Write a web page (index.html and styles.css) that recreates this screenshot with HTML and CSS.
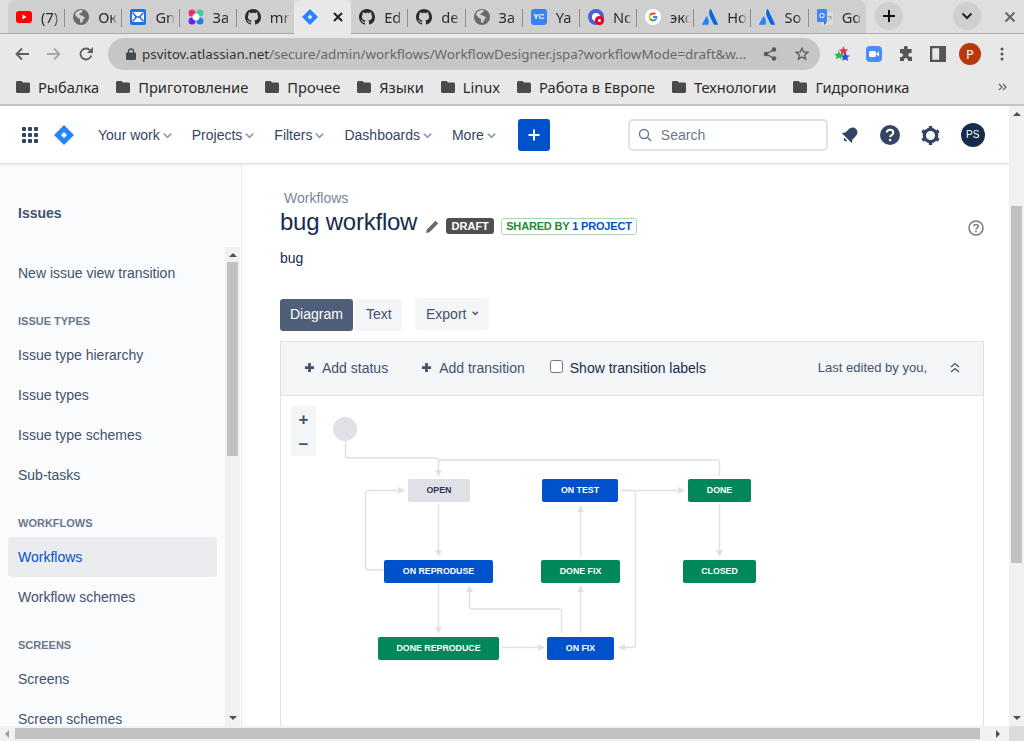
FILE: index.html
```html
<!DOCTYPE html>
<html lang="en">
<head>
    <meta charset="UTF-8">
    <title>bug workflow</title>
    <link rel="stylesheet" href="styles.css">
</head>
<body>
    <svg class="defs" width="0" height="0">
        <symbol id="globe" viewBox="0 0 16 16"><circle cx="8" cy="8" r="8" fill="#6a6a6a"/><path d="M7 1 3 3 2 6l3 3 2 1v3l2 1 1-3 2-2-2-2-3-1-1-1 2-1 2-2-1-1z" fill="#d0d0d0"/></symbol>
        <symbol id="github" viewBox="0 0 16 16"><path fill="#2b2b2b" d="M8 0C3.58 0 0 3.58 0 8c0 3.54 2.29 6.53 5.47 7.59.4.07.55-.17.55-.38 0-.19-.01-.82-.01-1.49-2.01.37-2.53-.49-2.69-.94-.09-.23-.48-.94-.82-1.13-.28-.15-.68-.52-.01-.53.63-.01 1.08.58 1.23.82.72 1.21 1.87.87 2.33.66.07-.52.28-.87.51-1.07-1.78-.2-3.64-.89-3.64-3.95 0-.87.31-1.59.82-2.15-.08-.2-.36-1.02.08-2.12 0 0 .67-.21 2.2.82.64-.18 1.32-.27 2-.27.68 0 1.36.09 2 .27 1.53-1.04 2.2-.82 2.2-.82.44 1.1.16 1.92.08 2.12.51.56.82 1.27.82 2.15 0 3.07-1.87 3.75-3.65 3.95.29.25.54.73.54 1.48 0 1.07-.01 1.93-.01 2.2 0 .21.15.46.55.38A8.013 8.013 0 0016 8c0-4.42-3.58-8-8-8z"/></symbol>
        <symbol id="atlassian" viewBox="0 0 16 16"><path fill="#0c66e4" d="M8.3 0C6.7 2.6 6.8 5.3 8 7.700L11.800 15.500c.1.2.3.3.5.3h3.400c.3 0 .4-.3.3-.5L8.900 0c-.1-.2-.5-.2-.6 0z"/><path fill="#2684ff" d="M4.700 7.300c-.2-.2-.4-.2-.5.1L.1 15.300c-.1.3 0 .5.3.5h5.500c.2 0 .4-.1.500-.3 1.100-2.600.3-6.200-1.700-8.200z"/></symbol>
        <symbol id="jira" viewBox="0 0 20 20"><path fill="#2684ff" fill-rule="evenodd" d="M10 0 20 10 10 20 0 10zM10 7 7 10l3 3 3-3z"/></symbol>
        <symbol id="folder" viewBox="0 0 14 12"><path fill="#4a4a4a" d="M1.500 0h4l1.500 1.600h5.500c.8 0 1.500.7 1.500 1.500v7.400c0 .8-.7 1.500-1.500 1.500h-11C.7 12 0 11.300 0 10.500v-9C0 .7.700 0 1.500 0z"/></symbol>
        <symbol id="chev" viewBox="0 0 10 6"><path d="M1.500 1 5 4.500 8.500 1" fill="none" stroke="currentColor" stroke-width="2" stroke-linecap="round" stroke-linejoin="round"/></symbol>
        <symbol id="plus" viewBox="0 0 12 12"><path d="M6 1v10M1 6h10" fill="none" stroke="currentColor" stroke-width="3"/></symbol>
    </svg>

    <!-- Browser tabs -->
    <div class="tabstrip">
        <div class="tab"><svg class="fav" viewBox="0 0 16 16"><rect y="2" width="16" height="12" rx="3" fill="#f00"/><path d="M6.500 5.500v5l4-2.500z" fill="#fff"/></svg><span class="tab-title">(7)</span></div>
        <div class="tab"><svg class="fav"><use href="#globe"/></svg><span class="tab-title">Ок</span></div>
        <div class="tab"><svg class="fav" viewBox="0 0 16 16"><rect width="16" height="16" rx="2" fill="#1a73e8"/><rect x="2" y="3" width="12" height="10" fill="#fff"/><path d="M2.500 3.500 6.500 8l-4 4.500M13.500 3.500 9.500 8l4 4.500M5 8h6" stroke="#1a73e8" stroke-width="1.500" fill="none"/></svg><span class="tab-title">Gn</span></div>
        <div class="tab"><svg class="fav" viewBox="0 0 16 16"><circle cx="4" cy="4" r="3.500" fill="#f0325f"/><circle cx="12" cy="4" r="3.500" fill="#3fcf9b"/><circle cx="4" cy="12" r="3.500" fill="#6a1ff0"/><circle cx="12" cy="12" r="3.500" fill="#1e7cf0"/><circle cx="8" cy="8" r="3.500" fill="#fff"/></svg><span class="tab-title">За</span></div>
        <div class="tab"><svg class="fav"><use href="#github"/></svg><span class="tab-title">mr</span></div>
        <div class="tab tab-active"><svg class="fav"><use href="#jira"/></svg><svg class="tab-close" viewBox="0 0 10 10"><path d="M1 1l8 8M9 1 1 9" stroke="#222" stroke-width="2"/></svg></div>
        <div class="tab"><svg class="fav"><use href="#github"/></svg><span class="tab-title">Ed</span></div>
        <div class="tab"><svg class="fav"><use href="#github"/></svg><span class="tab-title">de</span></div>
        <div class="tab"><svg class="fav"><use href="#globe"/></svg><span class="tab-title">За</span></div>
        <div class="tab"><span class="fav fav-yc">YC</span><span class="tab-title">Ya</span></div>
        <div class="tab"><svg class="fav" viewBox="0 0 16 16"><circle cx="8" cy="8" r="8" fill="#4a5fd0"/><circle cx="8" cy="8" r="4" fill="#fff"/><circle cx="11.500" cy="11.500" r="4.500" fill="#e8001c"/><circle cx="11.500" cy="11.500" r="1.500" fill="#fff"/></svg><span class="tab-title">Nc</span></div>
        <div class="tab"><svg class="fav" viewBox="0 0 16 16"><circle cx="8" cy="8" r="8" fill="#fff"/><path d="M5 6.200A3.500 3.500 0 0 1 10.400 5.400" stroke="#ea4335" stroke-width="1.800" fill="none"/><path d="M5 6.200a3.500 3.500 0 0 0 0 3.600" stroke="#fbbc05" stroke-width="1.800" fill="none"/><path d="M5 9.800a3.500 3.500 0 0 0 5.600.5" stroke="#34a853" stroke-width="1.800" fill="none"/><path d="M10.600 10.300A3.500 3.500 0 0 0 11.500 8H8" stroke="#4285f4" stroke-width="1.800" fill="none"/></svg><span class="tab-title">экс</span></div>
        <div class="tab"><svg class="fav"><use href="#atlassian"/></svg><span class="tab-title">Ho</span></div>
        <div class="tab"><svg class="fav"><use href="#atlassian"/></svg><span class="tab-title">So</span></div>
        <div class="tab"><svg class="fav" viewBox="0 0 16 16"><rect x="5" y="3" width="11" height="13" rx="1" fill="#dcdcdc"/><rect width="10" height="13" rx="1" fill="#4285f4"/><path d="M7 13v3l3-3z" fill="#3367d6"/><circle cx="5" cy="6.500" r="2.200" fill="none" stroke="#fff" stroke-width="1"/><path d="M11 8h4M13 7v1.500M11.500 12l3-3" stroke="#888" stroke-width=".8" fill="none"/></svg><span class="tab-title">Go</span></div>
        <div class="round-btn round-new"><svg width="14" height="14" viewBox="0 0 14 14"><path d="M7 1v12M1 7h12" stroke="#111" stroke-width="2"/></svg></div>
        <div class="round-btn round-list"><svg width="12" height="8" viewBox="0 0 12 8"><path d="M1.500 1.500 6 6l4.500-4.500" fill="none" stroke="#222" stroke-width="2"/></svg></div>
        <svg class="win-close" width="10" height="10" viewBox="0 0 10 10"><path d="M.5.500l9 9M9.500.500l-9 9" stroke="#666" stroke-width="2"/></svg>
    </div>

    <!-- Address bar -->
    <div class="toolbar">
        <svg class="tool" viewBox="0 0 14 14"><path d="M14 7H2M7 1.500 1.500 7 7 12.500" fill="none" stroke="#5f5f5f" stroke-width="1.800"/></svg>
        <svg class="tool tool-fwd" viewBox="0 0 14 14"><path d="M0 7h12M7 1.500 12.500 7 7 12.500" fill="none" stroke="#a8a8a8" stroke-width="1.800"/></svg>
        <svg class="tool tool-reload" viewBox="0 0 14 14"><path d="M12.300 8.500A5.500 5.500 0 1 1 11 3.200" fill="none" stroke="#5f5f5f" stroke-width="1.800"/><path d="M14 0v6H8z" fill="#5f5f5f"/></svg>
        <div class="omnibox">
            <svg class="lock" viewBox="0 0 10 12"><path d="M2.500 5V3.500a2.500 2.500 0 0 1 5 0V5" fill="none" stroke="#4a4a4a" stroke-width="1.300"/><rect y="4.500" width="10" height="7.500" rx="1" fill="#4a4a4a"/></svg>
            <div class="url"><span class="url-host">psvitov.atlassian.net</span>/secure/admin/workflows/WorkflowDesigner.jspa?workflowMode=draft&amp;w...</div>
            <svg class="omni-share" viewBox="0 0 14 14"><path d="M11 2.500 3 7l8 4.500" fill="none" stroke="#5a5a5a" stroke-width="1.300"/><circle cx="11" cy="2.500" r="2.300" fill="#5a5a5a"/><circle cx="3" cy="7" r="2.300" fill="#5a5a5a"/><circle cx="11" cy="11.500" r="2.300" fill="#5a5a5a"/></svg>
            <svg class="omni-star" viewBox="0 0 14 14"><path d="M7 1.200 8.700 5l4.100.4-3.100 2.700.9 4L7 10l-3.600 2.100.9-4-3.100-2.700L5.300 5z" fill="none" stroke="#5a5a5a" stroke-width="1.300"/></svg>
        </div>
        <svg class="ext ext-first" viewBox="0 0 16 16"><g transform="translate(9.500 5) scale(5)" fill="#f0304a"><path d="M0-1 .26-.36.95-.31.43.14.59.81 0 .45-.59.81-.43.14-.95-.31-.26-.36z"/></g><g transform="translate(4.800 9.500) scale(5)" fill="#23c050"><path d="M0-1 .26-.36.95-.31.43.14.59.81 0 .45-.59.81-.43.14-.95-.31-.26-.36z"/></g><g transform="translate(11.200 11) scale(5)" fill="#2a4fd8"><path d="M0-1 .26-.36.95-.31.43.14.59.81 0 .45-.59.81-.43.14-.95-.31-.26-.36z"/></g></svg>
        <svg class="ext" viewBox="0 0 16 16"><rect width="16" height="16" rx="4" fill="#4a8cff"/><rect x="3" y="5" width="7" height="6" rx="1.500" fill="#fff"/><path d="M10.500 7.500 13 5.500v5l-2.500-2z" fill="#fff"/></svg>
        <svg class="ext" viewBox="0 0 16 16"><path d="M6 1.500a1.800 1.800 0 0 1 3.600 0V3h4v4h-1.300a1.900 1.900 0 0 0 0 3.800H14V15H9.800v-1.200a1.900 1.900 0 0 0-3.800 0V15H2v-4h1.200a1.900 1.900 0 0 0 0-3.800H2V3h4z" fill="#555"/></svg>
        <svg class="ext" viewBox="0 0 14 14"><path fill="#555" fill-rule="evenodd" d="M0 0h14v14H0zM2 2v10h6V2z"/></svg>
        <div class="profile">P</div>
        <svg class="kebab" viewBox="0 0 4 14"><circle cx="2" cy="2" r="1.500" fill="#555"/><circle cx="2" cy="7" r="1.500" fill="#555"/><circle cx="2" cy="12" r="1.500" fill="#555"/></svg>
    </div>

    <!-- Bookmarks -->
    <div class="bookmarks">
        <div class="bookmark"><svg class="folder"><use href="#folder"/></svg>Рыбалка</div>
        <div class="bookmark"><svg class="folder"><use href="#folder"/></svg>Приготовление</div>
        <div class="bookmark"><svg class="folder"><use href="#folder"/></svg>Прочее</div>
        <div class="bookmark"><svg class="folder"><use href="#folder"/></svg>Языки</div>
        <div class="bookmark"><svg class="folder"><use href="#folder"/></svg>Linux</div>
        <div class="bookmark"><svg class="folder"><use href="#folder"/></svg>Работа в Европе</div>
        <div class="bookmark"><svg class="folder"><use href="#folder"/></svg>Технологии</div>
        <div class="bookmark"><svg class="folder"><use href="#folder"/></svg>Гидропоника</div>
        <svg class="more-marks" viewBox="0 0 9 8"><path d="M1 1l3 3-3 3M5 1l3 3-3 3" fill="none" stroke="#666" stroke-width="1.300"/></svg>
    </div>

    <div class="viewport">
        <div class="page">
            <!-- Jira nav -->
            <header class="topnav">
                <svg class="apps" viewBox="0 0 16 16"><g fill="#344563"><rect width="4" height="4" rx="1"/><rect x="6" width="4" height="4" rx="1"/><rect x="12" width="4" height="4" rx="1"/><rect y="6" width="4" height="4" rx="1"/><rect x="6" y="6" width="4" height="4" rx="1"/><rect x="12" y="6" width="4" height="4" rx="1"/><rect y="12" width="4" height="4" rx="1"/><rect x="6" y="12" width="4" height="4" rx="1"/><rect x="12" y="12" width="4" height="4" rx="1"/></g></svg>
                <svg class="logo"><use href="#jira"/></svg>
                <nav class="menu">
                    <a class="menu-item">Your work<svg class="chev"><use href="#chev"/></svg></a>
                    <a class="menu-item">Projects<svg class="chev"><use href="#chev"/></svg></a>
                    <a class="menu-item">Filters<svg class="chev"><use href="#chev"/></svg></a>
                    <a class="menu-item">Dashboards<svg class="chev"><use href="#chev"/></svg></a>
                    <a class="menu-item">More<svg class="chev"><use href="#chev"/></svg></a>
                </nav>
                <div class="create"><svg width="12" height="12" viewBox="0 0 12 12"><path d="M6 .5v11M.5 6h11" stroke="#fff" stroke-width="2"/></svg></div>
                <div class="search">
                    <svg width="14" height="14" viewBox="0 0 14 14"><circle cx="6" cy="6" r="4.500" fill="none" stroke="#6b778c" stroke-width="1.400"/><path d="M9.500 9.500 13 13" stroke="#6b778c" stroke-width="1.400"/></svg>
                    <span>Search</span>
                </div>
                <svg class="nav-icon bell" viewBox="0 0 18 18"><g transform="rotate(45 9 9)" fill="#344563"><path d="M9 .5C5.600.5 4 3 4 6.500v4L1.800 13.500h14.400L14 10.500v-4C14 3 12.400.5 9 .5z"/><path d="M7 15h4a2 2 0 0 1-4 0z"/></g></svg>
                <svg class="nav-icon help" viewBox="0 0 20 20"><circle cx="10" cy="10" r="10" fill="#344563"/><path d="M6.800 7.500C7 5.600 8.400 4.800 10 4.800c1.800 0 3.300 1.100 3.300 2.900 0 2.400-3.200 2.400-3.200 4.400" fill="none" stroke="#fff" stroke-width="2"/><circle cx="10.100" cy="15" r="1.300" fill="#fff"/></svg>
                <svg class="nav-icon gear" viewBox="0 0 20 20"><circle cx="10" cy="10" r="6.500" fill="none" stroke="#344563" stroke-width="3.500"/><g stroke="#344563" stroke-width="3.600"><path d="M10 0v3.500M10 16.500V20M1.300 5l3 1.800M15.700 13.200l3 1.800M1.300 15l3-1.800M15.700 6.800l3-1.800"/></g></svg>
                <div class="avatar">PS</div>
            </header>

            <div class="layout">
                <!-- Admin sidebar -->
                <aside class="sidebar">
                    <h2 class="side-title">Issues</h2>
                    <div class="side-scroll">
                        <div class="side-list">
                            <a class="side-link">New issue view transition</a>
                            <h3 class="side-head">ISSUE TYPES</h3>
                            <a class="side-link">Issue type hierarchy</a>
                            <a class="side-link">Issue types</a>
                            <a class="side-link">Issue type schemes</a>
                            <a class="side-link">Sub-tasks</a>
                            <h3 class="side-head">WORKFLOWS</h3>
                            <a class="side-link side-active">Workflows</a>
                            <a class="side-link">Workflow schemes</a>
                            <h3 class="side-head">SCREENS</h3>
                            <a class="side-link">Screens</a>
                            <a class="side-link">Screen schemes</a>
                        </div>
                        <div class="vbar vbar-side">
                            <i class="arrow-up"></i>
                            <div class="vbar-track"><div class="thumb"></div></div>
                            <i class="arrow-down"></i>
                        </div>
                    </div>
                </aside>

                <main class="content">
                    <div class="crumb">Workflows</div>
                    <div class="title-row">
                        <h1>bug workflow</h1>
                        <svg class="pencil" viewBox="0 0 14 14"><path fill="#6b6b6b" d="M10.500 .8 13.200 3.500 4.500 12.200 1 13l.8-3.500z"/></svg>
                        <span class="lozenge">DRAFT</span>
                        <span class="shared">SHARED BY <b>1 PROJECT</b></span>
                        <svg class="page-help" viewBox="0 0 16 16"><circle cx="8" cy="8" r="7" fill="none" stroke="#7a7a7a" stroke-width="1.500"/><path d="M5.800 6.300C6 5 6.900 4.500 8 4.500c1.200 0 2.200.7 2.200 1.900 0 1.600-2.200 1.600-2.200 3" fill="none" stroke="#7a7a7a" stroke-width="1.500"/><circle cx="8" cy="11.400" r="1" fill="#7a7a7a"/></svg>
                    </div>
                    <p class="issue-type">bug</p>

                    <div class="view-row">
                        <a class="btn btn-on">Diagram</a>
                        <a class="btn btn-text">Text</a>
                        <a class="btn btn-export">Export<svg class="chev-sm"><use href="#chev"/></svg></a>
                    </div>

                    <div class="designer">
                        <div class="designer-bar">
                            <a class="bar-action"><svg class="bar-plus"><use href="#plus"/></svg>Add status</a>
                            <a class="bar-action"><svg class="bar-plus"><use href="#plus"/></svg>Add transition</a>
                            <label class="bar-check"><input type="checkbox">Show transition labels</label>
                            <span class="edited">Last edited by you,</span>
                            <svg class="collapse" viewBox="0 0 10 11"><path d="M1 5 5 1.500 9 5M1 10 5 6.500 9 10" fill="none" stroke="#42526e" stroke-width="1.300"/></svg>
                        </div>
                        <div class="canvas">
                            <div class="zoom-box"><span>+</span><span>−</span></div>
                            <svg class="edges" viewBox="281 396 702 330" width="702" height="330">
                                <circle cx="345" cy="429" r="12" fill="#dfe1e6"/>
                                <g fill="none" stroke="#dfe1e6" stroke-width="1.500">
                                    <path d="M345.500 441v14q0 3 3 3h87q3 0 3 3v10"/>
                                    <path d="M719.500 476v-13q0-3-3-3H442q-3 0-3.500 3"/>
                                    <path d="M438.500 505v46"/>
                                    <path d="M384 570h-15q-3.500 0-3.500-3.500v-72.500q0-3.500 3.500-3.500h30"/>
                                    <path d="M438.500 585v42"/>
                                    <path d="M502 647.500h37"/>
                                    <path d="M580.500 633v-42"/>
                                    <path d="M580.500 556v-45"/>
                                    <path d="M621 490.500h58"/>
                                    <path d="M621 490.500h11q3.500 0 3.500 3.500v150q0 3.500-3.500 3.500h-8"/>
                                    <path d="M719.500 505v46"/>
                                    <path d="M561.500 633v-21q0-3-3-3h-86q-3 0-3-3v-15"/>
                                </g>
                                <g fill="#dfe1e6">
                                    <path d="M435 470h7l-3.500 7z"/>
                                    <path d="M435 550h7l-3.500 7z"/>
                                    <path d="M398 487v7l7-3.500z"/>
                                    <path d="M435 627h7l-3.500 7z"/>
                                    <path d="M538 644v7l7-3.500z"/>
                                    <path d="M577 592h7l-3.500-7z"/>
                                    <path d="M577 512h7l-3.500-7z"/>
                                    <path d="M678 487v7l7-3.500z"/>
                                    <path d="M625 644v7l-7-3.500z"/>
                                    <path d="M716 550h7l-3.500 7z"/>
                                    <path d="M466 592h7l-3.500-7z"/>
                                </g>
                            </svg>
                            <div class="node node-grey n-open">OPEN</div>
                            <div class="node node-blue n-test">ON TEST</div>
                            <div class="node node-green n-done">DONE</div>
                            <div class="node node-blue n-repro">ON REPRODUSE</div>
                            <div class="node node-green n-dfix">DONE FIX</div>
                            <div class="node node-green n-closed">CLOSED</div>
                            <div class="node node-green n-drepro">DONE REPRODUCE</div>
                            <div class="node node-blue n-fix">ON FIX</div>
                        </div>
                    </div>
                </main>
            </div>
        </div>

        <div class="vbar vbar-main">
            <i class="arrow-up"></i>
            <div class="vbar-track"><div class="thumb"></div></div>
            <i class="arrow-down"></i>
        </div>
        <div class="hbar">
            <i class="arrow-left"></i>
            <div class="hbar-thumb"></div>
            <i class="arrow-right"></i>
        </div>
        <div class="corner"></div>
    </div>
</body>
</html>
```

FILE: styles.css
```css
* {
    box-sizing: border-box;
}

html, body {
    margin: 0;
    padding: 0;
    height: 100%;
    overflow: hidden;
}

body {
    width: 1024px;
    height: 741px;
    display: flex;
    flex-direction: column;
    font-family: "Liberation Sans", Arial, sans-serif;
    font-size: 14px;
    color: #172b4d;
    background-color: #fff;
}

.defs {
    position: absolute;
}

/* Browser chrome */
.tabstrip {
    height: 34px;
    flex: none;
    display: flex;
    align-items: stretch;
    padding-left: 8px;
    background-color: #dfdfdf;
    border-bottom: 1px solid #a9a9a9;
    font-family: "Noto Sans", sans-serif;
}

.tab {
    width: 57.2px;
    height: 33px;
    flex: none;
    display: flex;
    align-items: center;
    padding-left: 8px;
    background-color: #cfcfcf;
    position: relative;
    overflow: hidden;
}

.tab:first-child {
    border-radius: 8px 0 0 0;
}

.tab::after {
    content: "";
    position: absolute;
    right: 0;
    top: 9px;
    width: 1px;
    height: 18px;
    background-color: #8e8e8e;
}

.tab-active {
    background-color: #e8e8e8;
    border-radius: 8px 8px 0 0;
    height: 34px;
    z-index: 1;
}

.tab-active::after,
.tab:nth-child(5)::after {
    display: none;
}

.tab:nth-child(15) {
    border-radius: 0 8px 0 0;
}

.tab:nth-child(15)::after {
    display: none;
}

.fav {
    width: 16px;
    height: 16px;
    flex: none;
}

.fav-yc {
    background-color: #3b82f0;
    color: #fff;
    border-radius: 3px;
    font-family: "Liberation Sans", sans-serif;
    font-size: 8px;
    font-weight: bold;
    line-height: 16px;
    text-align: center;
}

.tab-title {
    margin-left: 9px;
    width: 20px;
    overflow: hidden;
    white-space: nowrap;
    font-size: 14.67px;
    color: #2a2a2a;
    -webkit-mask-image: linear-gradient(to right, #000 65%, transparent);
    mask-image: linear-gradient(to right, #000 65%, transparent);
}

.tab-close {
    width: 10px;
    height: 10px;
    margin-left: 15px;
}

.round-btn {
    width: 28px;
    height: 28px;
    margin-top: 2px;
    flex: none;
    border-radius: 50%;
    background-color: #cfcfcf;
    display: flex;
    align-items: center;
    justify-content: center;
}

.round-new {
    margin-left: 9px;
}

.round-list {
    margin-left: 50px;
}

.win-close {
    margin: 12px 0 0 24px;
    flex: none;
}

.toolbar {
    height: 38px;
    flex: none;
    display: flex;
    align-items: center;
    padding-top: 2px;
    background-color: #e8e8e8;
}

.tool {
    width: 14px;
    height: 14px;
    margin-left: 15px;
    flex: none;
}

.tool-fwd {
    margin-left: 18px;
}

.tool-reload {
    margin-left: 18px;
}

.omnibox {
    width: 712px;
    height: 32px;
    margin-left: 15px;
    flex: none;
    display: flex;
    align-items: center;
    padding-left: 18px;
    background-color: #c6c6c6;
    border-radius: 16px;
    font-family: "Noto Sans", sans-serif;
    font-size: 13.4px;
    color: #686868;
}

.lock {
    width: 10px;
    height: 12px;
    flex: none;
}

.url {
    margin-left: 6px;
    width: 611px;
    white-space: nowrap;
    overflow: hidden;
}

.url-host {
    color: #333;
}

.omni-share,
.omni-star {
    width: 14px;
    height: 14px;
    flex: none;
}

.omni-share {
    margin-left: 10px;
}

.omni-star {
    margin-left: 18px;
}

.ext {
    width: 16px;
    height: 16px;
    margin-left: 16px;
    flex: none;
}

.ext-first {
    margin-left: 14px;
}

.profile {
    width: 22px;
    height: 22px;
    margin-left: 13px;
    border-radius: 50%;
    background-color: #b83a0c;
    color: #fff;
    font-family: "Noto Sans", sans-serif;
    font-size: 13px;
    line-height: 22px;
    text-align: center;
    flex: none;
}

.kebab {
    width: 4px;
    height: 14px;
    margin-left: 19px;
    flex: none;
}

.bookmarks {
    height: 32px;
    flex: none;
    display: flex;
    align-items: center;
    gap: 17px;
    padding: 0 0 2px 16px;
    background-color: #e8e8e8;
    font-family: "Noto Sans", sans-serif;
    font-size: 14.67px;
    color: #2a2a2a;
}

.bookmark {
    display: flex;
    align-items: center;
    gap: 8px;
    white-space: nowrap;
}

.folder {
    width: 14px;
    height: 12px;
}

.more-marks {
    width: 9px;
    height: 8px;
    margin-left: 72px;
}

/* Page area with scrollbars */
.viewport {
    flex: 1;
    min-height: 0;
    display: grid;
    grid-template-columns: 1fr 15px;
    grid-template-rows: 1fr 15px;
    border-top: 2px solid #c4c4c4;
}

.page {
    min-width: 0;
    min-height: 0;
    overflow: hidden;
    display: flex;
    flex-direction: column;
}

.vbar {
    display: flex;
    flex-direction: column;
    align-items: center;
    background-color: #f1f1f1;
}

.vbar-track {
    flex: 1;
    width: 100%;
    min-height: 0;
    padding: 0 2px;
}

.thumb {
    background-color: #c1c1c1;
}

.vbar-main .vbar-track {
    padding-top: 87px;
}

.vbar-main .thumb {
    height: 357px;
}

.vbar-side .vbar-track {
    padding-top: 2px;
}

.vbar-side .thumb {
    height: 194px;
}

.arrow-up,
.arrow-down,
.arrow-left,
.arrow-right {
    width: 0;
    height: 0;
    flex: none;
    display: block;
}

.arrow-up {
    margin: 6px 0 3px;
    border-left: 4px solid transparent;
    border-right: 4px solid transparent;
    border-bottom: 4px solid #505050;
}

.arrow-down {
    margin: 3px 0 6px;
    border-left: 4px solid transparent;
    border-right: 4px solid transparent;
    border-top: 4px solid #505050;
}

.hbar {
    display: flex;
    align-items: center;
    background-color: #f1f1f1;
}

.arrow-left {
    margin: 0 6px 0 5px;
    border-top: 4px solid transparent;
    border-bottom: 4px solid transparent;
    border-right: 4px solid #a0a0a0;
}

.hbar-thumb {
    width: 965px;
    height: 11px;
    background-color: #c1c1c1;
}

.arrow-right {
    margin-left: 16px;
    border-top: 4px solid transparent;
    border-bottom: 4px solid transparent;
    border-left: 4px solid #505050;
}

.corner {
    background-color: #dcdcdc;
}

/* Jira top nav */
.topnav {
    height: 58px;
    flex: none;
    display: flex;
    align-items: center;
    padding: 1px 0 0 22px;
    background-color: #fff;
    border-bottom: 1px solid #dfe1e6;
    box-shadow: 0 1px 2px rgba(9, 30, 66, 0.08);
    position: relative;
    z-index: 2;
}

.apps {
    width: 16px;
    height: 16px;
    flex: none;
}

.logo {
    width: 20px;
    height: 20px;
    margin-left: 16px;
    flex: none;
}

.menu {
    display: flex;
    margin-left: 24px;
    gap: 20px;
    color: #42526e;
}

.menu-item {
    display: flex;
    align-items: center;
    gap: 3px;
    white-space: nowrap;
    color: #344563;
}

.chev {
    width: 9px;
    height: 6px;
    color: #97a0af;
    margin-top: 1px;
}

.create {
    width: 32px;
    height: 32px;
    margin-left: 22px;
    flex: none;
    display: flex;
    align-items: center;
    justify-content: center;
    background-color: #0052cc;
    border-radius: 3px;
}

.search {
    width: 200px;
    height: 32px;
    margin-left: 78px;
    flex: none;
    display: flex;
    align-items: center;
    gap: 9px;
    padding-left: 8px;
    border: 2px solid #dfe1e6;
    border-radius: 5px;
    color: #6b778c;
}

.nav-icon {
    flex: none;
}

.bell {
    width: 18px;
    height: 18px;
    margin-left: 13px;
}

.help {
    width: 20px;
    height: 20px;
    margin-left: 21px;
}

.gear {
    width: 19px;
    height: 19px;
    margin-left: 21px;
}

.avatar {
    width: 24px;
    height: 24px;
    margin-left: 21px;
    flex: none;
    border-radius: 50%;
    background-color: #172b4d;
    color: #fff;
    font-size: 10px;
    line-height: 24px;
    text-align: center;
    letter-spacing: 0.3px;
}

/* Sidebar and content */
.layout {
    flex: 1;
    min-height: 0;
    display: flex;
}

.sidebar {
    width: 242px;
    flex: none;
    display: flex;
    flex-direction: column;
    background-color: #fafbfc;
    border-right: 1px solid #ebecf0;
}

.side-title {
    height: 83px;
    flex: none;
    margin: 0;
    padding: 41px 0 0 18px;
    font-size: 14px;
    line-height: 16px;
    font-weight: bold;
    color: #42526e;
}

.side-scroll {
    flex: 1;
    min-height: 0;
    display: flex;
}

.side-list {
    width: 225px;
    flex: none;
    overflow: hidden;
    padding: 6px 8px 0;
}

.vbar-side {
    width: 15px;
    flex: none;
    height: 479px;
}

.side-link {
    display: block;
    height: 40px;
    padding-left: 10px;
    line-height: 40px;
    border-radius: 3px;
    color: #42526e;
    white-space: nowrap;
}

.side-active {
    background-color: #ebecf0;
    color: #0052cc;
}

.side-head {
    margin: 0;
    height: 42px;
    padding: 21px 0 0 10px;
    font-size: 11px;
    line-height: 14px;
    font-weight: bold;
    color: #6b778c;
}

.content {
    flex: 1;
    min-width: 0;
    padding: 26px 25px 0 38px;
    display: flex;
    flex-direction: column;
}

.crumb {
    padding-left: 4px;
    line-height: 16px;
    color: #7a869a;
}

.title-row {
    height: 32px;
    display: flex;
    align-items: center;
}

h1 {
    margin: 0;
    font-size: 24px;
    font-weight: normal;
    letter-spacing: -0.24px;
    color: #172b4d;
    line-height: 32px;
}

.pencil {
    width: 14px;
    height: 14px;
    margin: 10px 0 0 8px;
    flex: none;
}

.lozenge {
    width: 48px;
    margin: 8px 0 0 7px;
    height: 16px;
    line-height: 16px;
    text-align: center;
    background-color: #505050;
    color: #fff;
    border-radius: 3px;
    font-size: 11px;
    font-weight: bold;
}

.shared {
    margin: 8px 0 0 7px;
    padding: 0 4px;
    height: 17px;
    line-height: 15px;
    border: 1px solid #abd5b4;
    border-radius: 3px;
    font-size: 11px;
    font-weight: bold;
    letter-spacing: -0.17px;
    color: #1f8a33;
    white-space: nowrap;
}

.shared b {
    color: #0052cc;
}

.page-help {
    width: 16px;
    height: 16px;
    margin: 12px 0 0 auto;
    flex: none;
}

.issue-type {
    margin: 12px 0 0;
    line-height: 16px;
    color: #172b4d;
}

.view-row {
    margin-top: 33px;
    display: flex;
    align-items: flex-start;
}

.btn {
    height: 32px;
    line-height: 30px;
    padding: 0 10px;
    border-radius: 3px;
    background-color: #f4f5f7;
    color: #42526e;
}

.btn-on {
    width: 73px;
    background-color: #505f79;
    color: #fff;
}

.btn-text {
    width: 47px;
    margin-left: 2px;
    padding-left: 11px;
}

.btn-export {
    width: 74px;
    margin: -1px 0 0 13px;
    padding-left: 11px;
    display: flex;
    align-items: center;
    gap: 6px;
}

.chev-sm {
    width: 8px;
    height: 5px;
    margin-top: -2px;
    color: #42526e;
}

.designer {
    margin-top: 10px;
    width: 704px;
    flex: 1;
    min-height: 0;
    border-left: 1px solid #dfe1e6;
    border-right: 1px solid #dfe1e6;
    border-top: 1px solid #dfe1e6;
    display: flex;
    flex-direction: column;
}

.designer-bar {
    height: 54px;
    flex: none;
    display: flex;
    align-items: center;
    padding: 0 0 2px 23px;
    background-color: #f4f5f7;
    border-bottom: 1px solid #dfe1e6;
    color: #42526e;
}

.bar-action {
    display: flex;
    align-items: center;
    gap: 7px;
    margin-right: 33px;
    white-space: nowrap;
}

.bar-plus {
    width: 11px;
    height: 11px;
    color: #42526e;
}

.bar-check {
    display: flex;
    align-items: center;
    margin-left: -8px;
    color: #172b4d;
    white-space: nowrap;
}

.bar-check input {
    width: 13px;
    height: 13px;
    margin: -2px 7px 0 0;
}

.edited {
    margin-left: auto;
    font-size: 13px;
    color: #42526e;
}

.collapse {
    width: 10px;
    height: 11px;
    margin: 0 23px;
    flex: none;
}

/* Workflow diagram, nodes are placed on a free canvas */
.canvas {
    flex: 1;
    min-height: 0;
    position: relative;
    overflow: hidden;
}

.edges {
    position: absolute;
    left: 0;
    top: 0;
}

.zoom-box {
    position: absolute;
    left: 10px;
    top: 10px;
    width: 25px;
    height: 50px;
    display: flex;
    flex-direction: column;
    background-color: #f4f5f7;
    border-radius: 3px;
    z-index: 1;
}

.zoom-box span {
    height: 25px;
    padding-top: 1px;
    line-height: 25px;
    text-align: center;
    font-size: 17px;
    font-weight: bold;
    color: #42526e;
}

.node {
    position: absolute;
    height: 23px;
    line-height: 23px;
    text-align: center;
    font-size: 8.8px;
    font-weight: bold;
    border-radius: 2px;
    white-space: nowrap;
}

.node-grey {
    background-color: #dfe1e6;
    color: #253858;
}

.node-blue {
    background-color: #0052cc;
    color: #fff;
}

.node-green {
    background-color: #00875a;
    color: #fff;
}

.n-open {
    left: 127px;
    top: 83px;
    width: 62px;
}

.n-test {
    left: 261px;
    top: 83px;
    width: 76px;
}

.n-done {
    left: 407px;
    top: 83px;
    width: 63px;
}

.n-repro {
    left: 103px;
    top: 164px;
    width: 109px;
}

.n-dfix {
    left: 260px;
    top: 164px;
    width: 79px;
}

.n-closed {
    left: 402px;
    top: 164px;
    width: 73px;
}

.n-drepro {
    left: 97px;
    top: 241px;
    width: 121px;
}

.n-fix {
    left: 266px;
    top: 241px;
    width: 67px;
}
```
